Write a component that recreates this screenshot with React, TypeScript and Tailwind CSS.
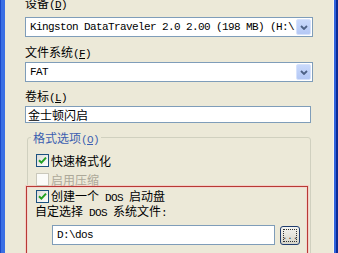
import React from "react";

const CJK = "font-['Noto_Sans_CJK_SC',sans-serif] text-[12px]";
const MONO = "font-['Liberation_Mono','Noto_Sans_CJK_SC',monospace] text-[11px] tracking-[-0.6px]";

function Lat({ children }: { children: React.ReactNode }) {
  return <span className={MONO}>{children}</span>;
}

function Hot({ pre, k }: { pre: string; k: string }) {
  return (
    <span>
      {pre}
      <Lat>
        (<span className="underline">{k}</span>)
      </Lat>
    </span>
  );
}

function Check({ checked, disabled }: { checked?: boolean; disabled?: boolean }) {
  return (
    <span
      className={
        disabled
          ? "w-[13px] h-[13px] border border-[#cac8bb] bg-[#fbfbf8] flex items-center justify-center shrink-0"
          : "w-[13px] h-[13px] border border-[#1c5180] bg-gradient-to-br from-[#dcdcd7] to-white flex items-center justify-center shrink-0"
      }
    >
      {checked && (
        <svg width="9" height="9" viewBox="0 0 9 9">
          <path d="M1 4.2 L3.4 6.6 L8 1.6" stroke="#21a121" strokeWidth="2" fill="none" />
        </svg>
      )}
    </span>
  );
}

function Combo({ text }: { text: string }) {
  return (
    <div className="h-[20px] border border-[#7f9db9] bg-white flex items-center">
      <div className={`flex-1 overflow-hidden whitespace-nowrap pl-[4px] pr-[2px] text-black ${MONO}`}>{text}</div>
      <div className="w-[15px] h-[16px] mr-[1px] rounded-[2px] bg-gradient-to-b from-[#c9d9fb] to-[#b4c8f5] border border-[#d6e2fc] flex items-center justify-center">
        <svg width="8" height="5" viewBox="0 0 8 5">
          <path d="M1 1 L4 4 L7 1" stroke="#4d6185" strokeWidth="1.8" fill="none" />
        </svg>
      </div>
    </div>
  );
}

export default function App() {
  return (
    <div className="w-[338px] h-[253px] overflow-hidden flex bg-[#ece9d8]">
      <div className="w-[5px] shrink-0 flex">
        <div className="w-[1px] bg-[#1a48c8]" />
        <div className="flex-1 bg-[#3a6fe4]" />
      </div>
      <div className={`flex-1 flex flex-col pl-[20px] pr-[20px] text-black ${CJK}`}>
        <div className="-mt-[5px] h-[15px] leading-[15px]">
          <Hot pre="设备" k="D" />
        </div>
        <div className="mt-[7px]">
          <Combo text="Kingston DataTraveler 2.0 2.00 (198 MB) (H:\" />
        </div>
        <div className="mt-[7px] h-[15px] leading-[15px]">
          <Hot pre="文件系统" k="F" />
        </div>
        <div className="mt-[3px]">
          <Combo text="FAT" />
        </div>
        <div className="mt-[6px] h-[15px] leading-[15px]">
          <Hot pre="卷标" k="L" />
        </div>
        <div className="mt-[3px] w-[286px] h-[20px] border border-[#7f9db9] bg-white flex items-center pl-[2px] leading-[15px]">
          金士顿闪启
        </div>
        <fieldset className="mt-[7px] ml-[2px] mr-[2px] border border-[#d0d0bf] rounded-[3px] pb-[20px]">
          <legend className="ml-[3px] px-[2px] h-[15px] leading-[15px] text-[#3c5fb0]">
            <Hot pre="格式选项" k="O" />
          </legend>
          <div className="mt-[8px] h-[15px] pl-[8px] flex items-center gap-[2px] leading-[15px]">
            <Check checked />
            <span>快速格式化</span>
          </div>
          <div className="mt-[4px] h-[15px] pl-[8px] flex items-center gap-[2px] leading-[15px] text-[#aca899]">
            <Check disabled />
            <span>启用压缩</span>
          </div>
          <div className="-mt-[1px] -ml-[2px] w-[282px] border border-[#b83a34] shadow-[0_0_0_1px_#f3cfc6,inset_0_0_0_1px_#f3d6ce] pt-[2px] pb-[20px]">
            <div className="h-[15px] pl-[9px] flex items-center gap-[2px] leading-[15px]">
              <Check checked />
              <span>
                创建一个<Lat> DOS </Lat>启动盘
              </span>
            </div>
            <div className="h-[14px] pl-[8px] leading-[14px]">
              自定选择<Lat> DOS </Lat>系统文件<Lat>:</Lat>
            </div>
            <div className="mt-[7px] pl-[25px] flex items-center gap-[5px]">
              <div className={`w-[223px] h-[20px] border border-[#7f9db9] bg-white flex items-center pl-[4px] ${MONO}`}>
                D:\dos
              </div>
              <div className="w-[20px] h-[19px] rounded-[3px] border border-[#1f3c6e] bg-gradient-to-b from-[#f4f4f0] to-[#d6d4c8] p-[2px]">
                <div className="w-full h-full border border-dotted border-[#333] flex items-end justify-center">
                  <span className="leading-[8px] text-[#333] text-[9px] font-['Liberation_Mono',monospace]">...</span>
                </div>
              </div>
            </div>
          </div>
        </fieldset>
      </div>
      <div className="w-[6px] shrink-0 flex">
        <div className="w-[1px] bg-[#f4f3ee]" />
        <div className="w-[2px] bg-[#2f62dc]" />
        <div className="flex-1 bg-[#0b2a95]" />
      </div>
    </div>
  );
}
